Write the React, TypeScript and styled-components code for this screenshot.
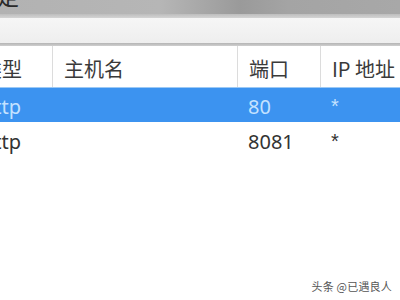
import React from "react";
import styled, { createGlobalStyle } from "styled-components";

const Global = createGlobalStyle`
  html, body { margin: 0; padding: 0; background: #ffffff; }
  body { width: 400px; height: 300px; overflow: hidden; }
  #root { width: 400px; height: 300px; }
`;

const Page = styled.div`
  position: relative;
  width: 400px;
  height: 300px;
  background: #ffffff;
  overflow: hidden;
  font-family: "Noto Sans", "Noto Sans CJK SC", sans-serif;
`;

const TitleBar = styled.div`
  height: 14px;
  overflow: hidden;
  background: linear-gradient(
    to right,
    #b2b2b2 0%,
    #b6b6b6 40%,
    #9a9a9a 60%,
    #a4a4a4 72%,
    #a8a8a8 100%
  );
`;

const TitleText = styled.div`
  margin-top: -17px;
  margin-left: -3px;
  font-family: "Noto Sans CJK SC", sans-serif;
  font-size: 22px;
  line-height: 24px;
  color: #2a2a2a;
`;

const FrameBand = styled.div`
  height: 4px;
  background: linear-gradient(to bottom, #bdbdbd, #d4d4d4);
`;

const Toolbar = styled.div`
  height: 25px;
  background: linear-gradient(to bottom, #f6f6f6, #eeeeee);
`;

const ToolbarRule = styled.div`
  height: 3px;
  background: linear-gradient(to bottom, #b4b4b4, #cfcfcf);
`;

const Table = styled.div`
  margin-left: -29px;
`;

const Row = styled.div<{ $selected?: boolean; $header?: boolean }>`
  display: grid;
  grid-template-columns: 81px 185px 83px 1fr;
  height: ${(p) => (p.$header ? "41px" : "35px")};
  align-items: center;
  background: ${(p) => (p.$selected ? "#3c93f0" : "#ffffff")};
  border-top: ${(p) => (p.$selected ? "1px solid #9cc9f5" : "none")};
  box-sizing: border-box;
`;

const HeadCell = styled.div<{ $sep?: boolean }>`
  height: 100%;
  display: flex;
  align-items: center;
  padding: 3px 0 0 11px;
  box-sizing: border-box;
  font-family: "Noto Sans CJK SC", sans-serif;
  font-size: 20px;
  color: #3a3a3a;
  white-space: nowrap;
  border-left: ${(p) => (p.$sep ? "1px solid #dcdcdc" : "none")};
`;

const Cell = styled.div<{ $selected?: boolean; $mark?: boolean }>`
  padding: 3px 0 0 11px;
  font-family: ${(p) =>
    p.$mark ? '"Liberation Sans", sans-serif' : '"Noto Sans", "Noto Sans CJK SC", sans-serif'};
  font-size: 20px;
  color: ${(p) => (p.$selected ? "#c4e2ff" : "#333333")};
  white-space: nowrap;
`;

const Watermark = styled.div`
  position: absolute;
  right: 8px;
  bottom: 6px;
  font-family: "Noto Sans CJK SC", sans-serif;
  font-size: 11px;
  color: #555555;
  letter-spacing: 0.2px;
`;

const rows = [
  { type: "http", host: "", port: "80", ip: "*", selected: true },
  { type: "http", host: "", port: "8081", ip: "*", selected: false },
];

export default function App() {
  return (
    <Page>
      <Global />
      <TitleBar>
        <TitleText>定</TitleText>
      </TitleBar>
      <FrameBand />
      <Toolbar />
      <ToolbarRule />
      <Table>
        <Row $header>
          <HeadCell>类型</HeadCell>
          <HeadCell $sep>主机名</HeadCell>
          <HeadCell $sep>端口</HeadCell>
          <HeadCell $sep>IP 地址</HeadCell>
        </Row>
        {rows.map((r, i) => (
          <Row key={i} $selected={r.selected}>
            <Cell $selected={r.selected}>{r.type}</Cell>
            <Cell $selected={r.selected}>{r.host}</Cell>
            <Cell $selected={r.selected}>{r.port}</Cell>
            <Cell $selected={r.selected} $mark>
              {r.ip}
            </Cell>
          </Row>
        ))}
      </Table>
      <Watermark>头条 @已遇良人</Watermark>
    </Page>
  );
}
